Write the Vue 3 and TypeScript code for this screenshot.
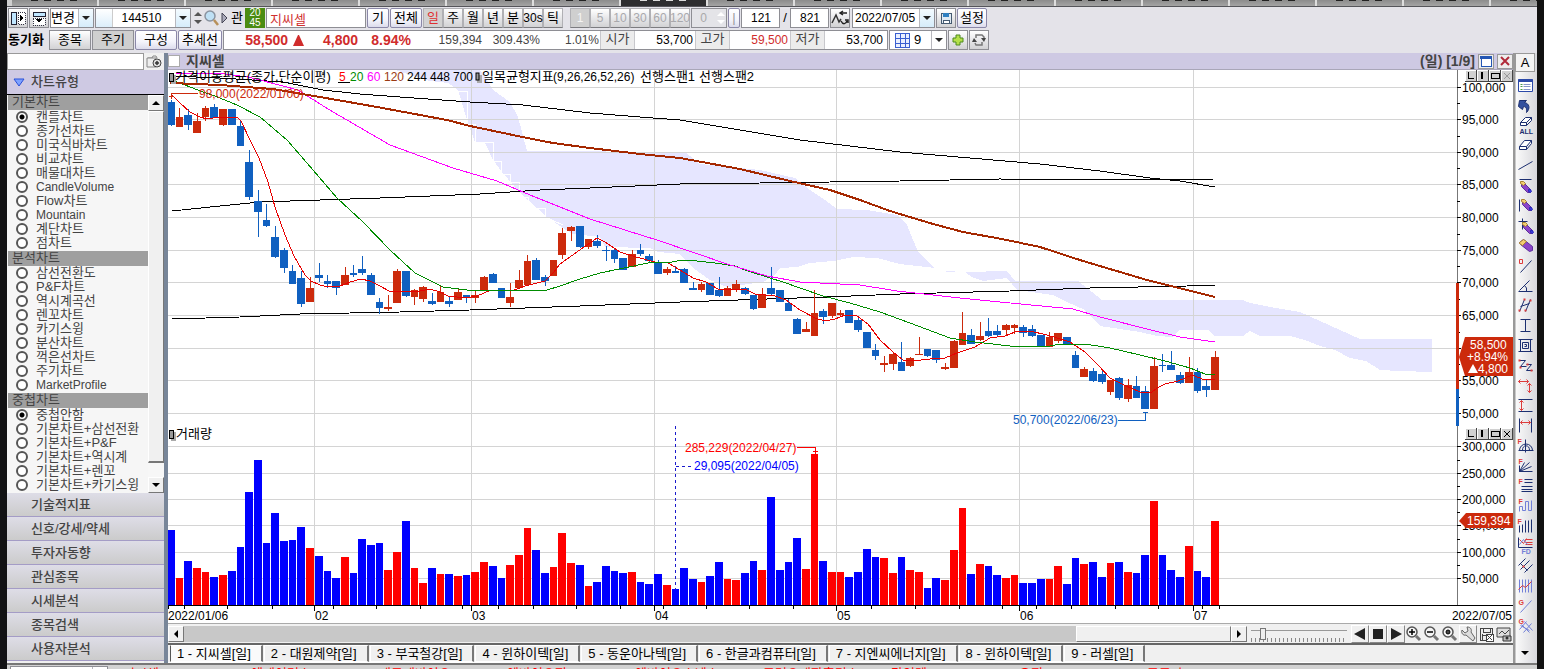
<script setup lang="ts">
interface Shape {
  d?: string
  c?: string
  f?: string
  w?: number
  t?: string
  x?: number
  y?: number
  s?: number
}

const navy = '#1c2f70'
const red = '#dd3c3c'
const peri = '#7280d8'

const stripTabs = Array.from({ length: 18 }, (_, i) => i)

const periods = ['일', '주', '월', '년', '분', '30s', '틱']
const minutes = ['1', '5', '10', '30', '60', '120']

const groups = [
  {
    name: '기본차트',
    items: ['캔들차트', '종가선차트', '미국식바차트', '비교차트', '매물대차트', 'CandleVolume', 'Flow차트', 'Mountain', '계단차트', '점차트'],
  },
  {
    name: '분석차트',
    items: ['삼선전환도', 'P&F차트', '역시계곡선', '렌꼬차트', '카기스윙', '분산차트', '꺽은선차트', '주기차트', 'MarketProfile'],
  },
  {
    name: '중첩차트',
    items: ['중첩안함', '기본차트+삼선전환', '기본차트+P&F', '기본차트+역시계', '기본차트+렌꼬', '기본차트+카기스윙'],
  },
]
const isLatin = (s: string) => /^[A-Za-z]+$/.test(s)
const sections = ['기술적지표', '신호/강세/약세', '투자자동향', '관심종목', '시세분석', '종목검색', '사용자분석']
const chartTabs = ['지씨셀', '대원제약', '부국철강', '윈하이텍', '동운아나텍', '한글과컴퓨터', '지엔씨에너지', '윈하이텍', '러셀']
const tickers = ['지씨셀', '에케이머스', '케코케바이오', '엔바이오진', '엔바이오스넥스', '고려오케팜홀딩스', '타임텍', '유진', '고고가', 'TPS']

// high, body top, body bottom, low
const raw =
  'b100,102,125,126 r108,117,127,127 b109,115,125,130 r113,121,133,133 r106,108,117,121 b104,107,118,118 r109,109,125,126 b109,109,125,125 b120,126,146,146 b150,162,197,200 ' +
  'b190,201,212,237 b204,220,226,227 b226,237,257,258 b248,250,268,273 b265,271,284,284 b271,278,304,307 r277,288,302,302 b263,275,278,282 b275,281,284,288 b281,281,288,295 ' +
  'r267,275,285,285 b265,273,275,277 b256,269,273,275 b273,275,295,295 b298,302,308,314 r295,307,309,311 r269,271,303,303 b271,271,296,297 r289,290,297,305 r286,287,299,302 ' +
  'b293,301,304,305 r286,292,302,302 b296,301,304,307 r288,292,300,300 b295,295,298,303 r290,295,298,303 r276,277,291,291 b273,274,283,283 b288,288,298,298 r283,297,303,307 ' +
  'r270,280,288,288 r255,261,285,285 b258,260,280,280 b275,277,281,286 r260,260,276,276 r228,233,255,259 r226,227,231,241 b226,226,247,248 r239,239,247,249 b235,241,246,248 ' +
  'b246,250,251,261 b248,250,259,263 b258,258,270,270 r250,254,267,267 b244,250,254,256 b254,256,261,263 b260,263,274,274 r267,269,273,275 b266,271,273,273 b268,269,283,283 ' +
  'b282,288,290,290 r282,284,290,292 b283,283,295,295 b277,290,296,297 r286,288,296,296 r280,284,290,292 b287,288,294,295 b295,295,309,310 r288,294,308,308 b267,288,294,295 ' +
  'b290,290,302,302 b299,303,311,311 b318,319,334,334 r322,329,332,332 r290,313,336,336 b309,311,317,324 r303,303,316,318 r310,313,315,317 b310,310,323,323 b316,320,330,332 ' +
  'b332,332,348,348 b344,350,356,360 r356,363,365,372 r352,354,364,370 b342,362,371,371 r357,358,366,367 r337,354,355,355 b349,349,356,357 b350,350,360,363 r363,367,369,370 ' +
  'r340,341,368,368 r312,333,345,345 b329,335,344,344 r322,336,340,341 b318,331,336,337 b325,331,335,337 r324,325,330,336 r324,325,328,334 b325,327,333,337 b325,329,336,337 ' +
  'b335,335,347,347 r332,337,347,347 r333,333,341,343 b337,337,345,345 b351,355,368,368 r367,369,377,377 b368,371,381,382 b369,374,382,384 r380,380,392,395 b377,378,398,400 ' +
  'r379,385,399,402 b376,386,398,398 b386,391,409,409 r357,366,409,409 b354,365,366,372 b351,365,370,370 b372,375,383,384 r357,372,383,383 b368,372,391,393 b380,386,390,397 r351,357,390,390'

const volumes = [
  75, 27, 44, 37, 33, 28, 30, 34, 58, 113, 145, 62, 92, 64, 65, 78, 57, 49, 34, 27, 48, 32, 66, 60, 62, 35, 53, 84, 37, 22, 37, 31, 31, 29, 30, 33, 43, 39, 27, 40,
  50, 77, 55, 32, 38, 72, 42, 40, 19, 23, 39, 34, 32, 33, 23, 21, 31, 20, 16, 37, 26, 23, 29, 43, 26, 25, 32, 44, 35, 108, 35, 43, 67, 36, 151, 44, 33, 33, 28, 33,
  56, 48, 47, 32, 48, 35, 33, 17, 27, 25, 55, 97, 31, 41, 39, 30, 27, 30, 22, 22, 26, 26, 39, 21, 47, 41, 43, 28, 42, 43, 33, 32, 50, 104, 50, 35, 28, 59, 34, 28, 84,
]

const left = (i: number) => Math.floor(167.4 + i * 8.7)
const candles = raw.split(' ').map((s, i) => {
  const [h, t, b, l] = s.slice(1).split(',').map(Number)
  const x = left(i)
  const w = left(i + 1) - x - 1
  return { up: s[0] === 'r', h, t, b, l, x, w, mid: x + Math.floor(w / 2), v: volumes[i] }
})

const priceTicks = [87, 119, 152, 184, 217, 250, 282, 315, 348, 380, 413].map((y, i) => ({ y, label: (100000 - i * 5000).toLocaleString('en-US') }))
const shownPrices = priceTicks.filter((t) => t.y !== 348)
const volTicks = [446, 473, 499, 525, 552, 578].map((y, i) => ({ y, label: (300000 - i * 50000).toLocaleString('en-US') }))
const minorTicks = [103, 136, 168, 201, 234, 266, 299, 332, 364, 397, 460, 486, 512, 539, 565]
const months = [
  { x: 314, label: '02' },
  { x: 471, label: '03' },
  { x: 654, label: '04' },
  { x: 836, label: '05' },
  { x: 1019, label: '06' },
  { x: 1193, label: '07' },
]
const weekTicks = [168, 184, 227, 272, 333, 376, 420, 462, 498, 533, 576, 620, 663, 706, 749, 793, 871, 915, 959, 1002, 1036, 1071, 1115, 1158, 1202, 1219]

const lines = [
  { c: '#000', w: 1, p: '172,76 220,78 283,82 323,90 360,94 400,97 470,102 523,105 590,113 640,117 680,120 740,130 800,140 850,146 900,152 970,158 1040,164 1100,171 1150,178 1180,181 1215,187' },
  { c: '#000', w: 1, p: '172,211 220,206 260,202 320,200 380,198 480,194 540,190 590,188 680,184 760,183 830,182 900,181 1000,179 1100,180 1215,179' },
  { c: '#000', w: 1, p: '172,319 240,317 300,314 400,312 470,310 580,306 680,302 767,299 827,297 900,294 1010,291 1090,288 1187,286 1215,285' },
  { c: '#e80000', w: 1, p: '172,95 180,103 190,112 200,117 207,119 220,117 238,118 241,121 250,140 259,158 268,182 275,207 285,235 294,256 305,275 311,281 320,285 328,287 340,286 350,282 361,279 370,281 380,286 389,291 400,291 410,292 420,291 430,289 440,292 448,296 466,298 477,296 491,290 512,291 525,286 545,281 553,273 560,264 584,247 590,243 597,238 605,242 620,252 636,257 655,262 668,263 680,270 693,278 706,282 718,289 735,289 745,289 755,294 775,296 786,300 800,310 815,318 825,321 835,319 845,315 857,316 868,324 880,340 893,352 903,360 913,361 930,359 945,358 957,353 975,347 990,338 1005,336 1015,332 1030,331 1047,335 1070,342 1085,352 1098,365 1110,378 1124,385 1140,392 1152,392 1157,388 1165,384 1178,381 1192,375 1205,380 1215,379' },
  { c: '#008c00', w: 1, p: '172,80 190,87 203,92 215,96 237,105 260,117 287,140 307,163 337,198 363,222 390,250 415,273 443,287 467,290 513,290 520,291 547,290 560,286 580,279 600,273 648,263 672,262 683,260 697,261 715,263 735,266 745,270 770,278 783,282 800,288 823,296 850,303 880,312 910,323 950,338 975,342 1010,346 1045,347 1060,344 1085,344 1110,348 1140,355 1165,361 1190,368 1205,374 1215,374' },
  { c: '#f0f', w: 1, p: '176,73 217,73 248,77 283,86 298,90 328,109 390,145 453,168 497,181 530,195 590,219 660,241 727,264 767,276 800,282 860,285 897,291 933,295 960,298 1000,302 1073,309 1100,317 1147,329 1180,337 1215,342' },
  { c: '#a52800', w: 2, p: '170,83 220,85 273,89 320,97 377,107 447,120 470,126 527,138 553,143 590,148 640,154 680,158 740,169 790,181 830,190 860,200 890,211 933,224 963,232 1002,239 1040,247 1083,261 1147,280 1183,289 1215,297' },
]

const legend = [
  { x: 339, t: '5', c: '#f00' },
  { x: 350, t: '20', c: '#008c00' },
  { x: 367, t: '60', c: '#f0f' },
  { x: 384, t: '120', c: '#9a3a12' },
  { x: 407, t: '244', c: '#000' },
  { x: 430, t: '448', c: '#000' },
  { x: 453, t: '700', c: '#000' },
]

const pencil = (dx: number, dy: number): Shape[] => [
  { d: `M${dx + 1} ${dy + 1}l2 0 7 7 0 3 -3 0 -6 -6z`, c: '#5b2f9c', f: '#8c45c8', w: 1 },
  { d: `M${dx} ${dy}l3 0 2 2 -2 2 -3 -2z`, c: '#a98432', f: '#f2cf72', w: 1 },
  { d: `M${dx + 8} ${dy + 8}l2 0 1 2 -1 1 -2 -1z`, c: '#2a2ab8', f: '#3d3de0', w: 1 },
]

const tools: { name: string; shapes: Shape[] }[] = [
  { name: '목록', shapes: [{ d: 'M2 3h14v12h-14z', c: '#2b49a8', f: '#fff', w: 1 }, { d: 'M2 4h14', c: '#2b49a8', w: 3 }, { d: 'M4 8h2M4 10h2M4 13h2', c: '#4a9a4a', w: 1 }, { d: 'M7 8h7M7 10h7M7 13h7', c: '#8795c8', w: 1 }] },
  { name: '되돌리기', shapes: [{ d: 'M3 4h7l-2 2c5 1 6 6 2 10 1 -4 -1 -6 -3 -6l-1 3 -4 -3z', c: navy, f: '#33509e', w: 1 }] },
  { name: '전체삭제', shapes: [{ d: 'M4 6l5 -5h6l-5 5zM4 6v3h6v-3M10 9l5 -5v-3', c: navy, f: '#fff', w: 1 }, { t: 'ALL', x: 3, y: 17, s: 7, c: navy }] },
  { name: '삭제', shapes: [{ d: 'M3 10l5 -6h7l-5 6zM3 10v3h7v-3M10 13l5 -6v-3', c: navy, f: '#fff', w: 1 }] },
  { name: '추세선', shapes: [{ d: 'M2 13L16 5', c: navy, w: 1 }] },
  { name: '수평선', shapes: [{ d: 'M3 3h12', c: navy, w: 1 }, ...pencil(4, 5)] },
  { name: '수직선', shapes: [{ d: 'M3 3v12', c: navy, w: 1 }, ...pencil(5, 3)] },
  { name: '십자선', shapes: [{ d: 'M2 5h9M6 2v11', c: navy, w: 1 }, ...pencil(6, 6)] },
  { name: '지우개', shapes: [{ d: 'M3 6l4 -3 9 7 0 4 -3 1 -9 -7z', c: '#5b2f9c', f: '#8c45c8', w: 1 }, { d: 'M3 6l4 -3 3 2 -4 4 -3 -2z', c: '#a98432', f: '#f2cf72', w: 1 }] },
  { name: '대각선', shapes: [{ d: 'M3 3h3v4h-3z', c: red, w: 1 }, { d: 'M4 16L15 4', c: navy, w: 1 }] },
  { name: '각도', shapes: [{ d: 'M2 15h14M3 14L13 4M8 9q3 2 2 6', c: navy, w: 1 }] },
  { name: '평행선', shapes: [{ d: 'M3 15L8 3M9 15L14 3M4 10l9 -3', c: navy, w: 1 }, { d: 'M2 14h2M7 3h2M8 14h2M13 4h2', c: red, w: 2 }] },
  { name: '기둥', shapes: [{ d: 'M4 3h10M4 15h10M9 3v12', c: navy, w: 1 }] },
  { name: '사각', shapes: [{ d: 'M2 3h14M2 15h14M4 3v12M14 3v12M6 6h6v6h-6zM8 8h2v2h-2', c: navy, w: 1 }] },
  { name: '파동', shapes: [{ d: 'M3 4h6L4 10h6M10 8h5l-5 6h6', c: navy, w: 1 }, { d: 'M2 4h2M3 11h2M10 8h2M14 14h2', c: red, w: 2 }] },
  { name: '가로세로', shapes: [{ d: 'M2 5h10M4 3L2 5l2 2M10 3l2 2 -2 2M13 7v9M11 9l2 -2 2 2M11 14l2 2 2 -2', c: red, w: 1 }] },
  { name: '높이', shapes: [{ d: 'M2 3h14M2 15h14', c: navy, w: 1 }, { d: 'M5 4v10M3 6l2 -2 2 2M3 12l2 2 2 -2', c: red, w: 1 }] },
  { name: '너비', shapes: [{ d: 'M3 2v14M15 2v14', c: navy, w: 1 }, { d: 'M4 6h10M6 4L4 6l2 2M12 4l2 2 -2 2', c: red, w: 1 }] },
  { name: '피보나치 원호', shapes: [{ t: 'F', x: 1, y: 7, s: 7, c: red }, { d: 'M3 14a6 6 0 0 1 13 0M6 14a3 4 0 0 1 7 0M9 3v13M2 14h15', c: navy, w: 1 }] },
  { name: '피보나치 팬', shapes: [{ t: 'F', x: 2, y: 7, s: 7, c: red }, { d: 'M3 9v6h13M3 15L8 6M3 15l10 -9M3 15l12 -5', c: navy, w: 1 }] },
  { name: '피보나치 되돌림', shapes: [{ t: 'F', x: 2, y: 7, s: 7, c: red }, { d: 'M8 3h8M8 6h8M5 10h11M5 13h11M5 15h11', c: navy, w: 1 }] },
  { name: '피보나치 확장', shapes: [{ t: 'F', x: 2, y: 7, s: 7, c: red }, { d: 'M3 15v-5h3v4h3v-9h3v9h3v-10', c: peri, w: 1 }] },
  { name: '피보나치 시간', shapes: [{ t: 'F', x: 1, y: 7, s: 7, c: red }, { d: 'M3 9v7M6 8v8M9 4v12M12 4v12M15 3v13', c: navy, w: 1 }] },
  { name: 'FD', shapes: [{ d: 'M2 1v10h14', c: navy, w: 1 }, { d: 'M3 3l4 4 3 -5M9 3h7M9 6h7M9 8h7', c: red, w: 1 }, { d: 'M3 8l4 -5 4 5', c: peri, w: 1 }, { t: 'FD', x: 5, y: 17, s: 7, c: peri }] },
  { name: '포크', shapes: [{ d: 'M2 9L9 2M4 13L13 4M8 16l8 -8M4 7l7 7', c: navy, w: 1 }, { d: 'M6 10h2', c: red, w: 2 }] },
  { name: '회귀', shapes: [{ d: 'M3 3v13M6 3v13M9 3v13M12 3v13M15 3v13', c: peri, w: 1 }, { d: 'M2 13l4 -4 3 2 6 -6', c: red, w: 1 }] },
  { name: '갠선', shapes: [{ t: 'G', x: 2, y: 8, s: 7, c: red }, { d: 'M4 16L15 4', c: peri, w: 1 }] },
  { name: '갠격자', shapes: [{ t: 'G', x: 2, y: 7, s: 7, c: red }, { d: 'M5 8l8 8M8 5l8 9M3 13l7 -8M7 16l8 -9M4 9l9 5', c: peri, w: 1 }] },
]
</script>

<template>
  <div class="app">
    <div class="strip">
      <span v-for="i in stripTabs" :key="i" class="strip-tab" :class="{ on: i === 7 }"><i></i></span>
    </div>

    <div class="bars">
      <div class="bar">
        <button class="b20" aria-label="왼쪽 패널">
          <svg width="16" height="16" shape-rendering="crispEdges"><path d="M1 2h5v12h-5z" fill="#bfe6ff" stroke="#223" /><path d="M8 2h7v12h-7z" fill="#fff" stroke="#334" stroke-dasharray="1 1" /><path d="M10 5v6l4-3z" fill="#000" /></svg>
        </button>
        <button class="b20" aria-label="위쪽 패널">
          <svg width="16" height="16" shape-rendering="crispEdges"><path d="M2 2h12v4h-12z" fill="#bfe6ff" stroke="#223" /><path d="M2 8h12v7h-12z" fill="#fff" stroke="#334" stroke-dasharray="1 1" /><path d="M5 9h6l-3 4z" fill="#000" /></svg>
        </button>
        <div class="combo w44"><select aria-label="종목 변경"><option>변경</option></select><span class="dd blue"></span></div>
        <div class="combo code"><span class="slot"></span><input aria-label="종목코드" value="144510"><span class="dd blue"></span></div>
        <div class="spin"><span class="up"></span><span class="down"></span></div>
        <button class="mini" aria-label="종목 찾기">
          <svg width="15" height="16"><circle cx="6" cy="6" r="5" fill="#bfe0f5" stroke="#8b93a0" stroke-width="1.5" /><path d="M10 10l4 5" stroke="#b8905a" stroke-width="2.5" /></svg>
        </button>
        <button class="mini w10" aria-label="다음"><svg width="7" height="10"><path d="M1 0v10l5-5z" fill="#aab" stroke="#445" /></svg></button>
        <button class="mini w14">관</button>
        <span class="rate"><span>20</span><span>45</span></span>
        <input class="field name" aria-label="종목명" value="지씨셀">
        <button class="lav w22">기</button>
        <button class="lav w32">전체</button>
        <div class="seg"><button v-for="(p, i) in periods" :key="p" :class="{ on: i === 0, sm: p === '30s' }">{{ p }}</button></div>
        <div class="seg off"><button v-for="(p, i) in minutes" :key="p" class="sm" :class="{ on: i === 0 }" disabled>{{ p }}</button></div>
        <div class="combo zero"><input aria-label="사용자 주기" value="0" disabled><span class="spin"><span class="up"></span><span class="down"></span></span></div>
        <button class="lav w12">|</button>
        <input class="field num" aria-label="표시 개수" value="121">
        <span class="slash">/</span>
        <input class="field num" aria-label="전체 개수" value="821">
        <button class="b20" aria-label="차트 되돌리기">
          <svg width="18" height="16"><path d="M1 13l4-8 3 7 2-3" fill="none" stroke="#333" stroke-width="1.5" /><path d="M16 3h-6M12 1l-3 2 3 2M10 11c2 4 5 3 6 0M14 10h3v3" fill="none" stroke="#222" stroke-width="1.5" /></svg>
        </button>
        <div class="combo date"><input aria-label="기준일" value="2022/07/05"><span class="dd blue"></span></div>
        <button class="b20" aria-label="저장">
          <svg width="14" height="14" shape-rendering="crispEdges"><path d="M2 2h10v10h-10z" fill="#dfe9f2" stroke="#455a70" /><path d="M4 2h6v4h-6z" fill="#2f7fc0" /><path d="M4 9h6v3h-6z" fill="#fff" stroke="#455a70" /></svg>
        </button>
        <button class="lav w30">설정</button>
      </div>

      <div class="bar">
        <b class="sync">동기화</b>
        <button class="gry w42">종목</button>
        <button class="gry w42 on">주기</button>
        <button class="lav w42">구성</button>
        <button class="lav w44">추세선</button>
        <div class="quote">
          <b class="q price">58,500</b>
          <svg class="tri" width="11" height="11"><path d="M5 0h1l5 11h-11z" fill="#d02c2c" /></svg>
          <b class="q diff">4,800</b>
          <b class="q pct">8.94%</b>
          <span class="q vol">159,394</span>
          <span class="q rat">309.43%</span>
          <span class="q turn">1.01%</span>
          <span class="lab">시가</span><span class="q val">53,700</span>
          <span class="lab">고가</span><span class="q val hi">59,500</span>
          <span class="lab">저가</span><span class="q val">53,700</span>
        </div>
        <div class="combo nine">
          <svg width="16" height="16" shape-rendering="crispEdges"><path d="M1 1h14v14h-14zM6 1v14M11 1v14M1 6h14M1 11h14" fill="#eaf0ff" stroke="#3a5fd0" /></svg>
          <select aria-label="화면 분할"><option>9</option></select><span class="dd"></span>
        </div>
        <button class="b20" aria-label="추가"><svg width="12" height="12"><path d="M4 1h4v3h3v4h-3v3h-4v-3h-3v-4h3z" fill="#b4e04a" stroke="#4c8a1c" /></svg></button>
        <button class="b20" aria-label="새로고침"><svg width="14" height="14"><path d="M4 5V2h6l2 2v2M10 9v3H4l-1-2" fill="none" stroke="#777" stroke-width="1.5" /><path d="M9 5h5l-2 4zM0 9l2-4 3 4z" fill="#444" /></svg></button>
      </div>
    </div>

    <div class="main">
      <aside class="side">
        <div class="find">
          <input aria-label="차트 검색">
          <button aria-label="검색 설정"><svg width="16" height="14"><path d="M2 3h4l1-2h3l1 2" fill="none" stroke="#888" /><path d="M1 3h9v9h-9z" fill="#eee" stroke="#888" /><circle cx="11" cy="8" r="4" fill="#ddd" stroke="#444" /><path d="M9 8h4M11 6v4" stroke="#333" stroke-width="1.5" /></svg></button>
        </div>
        <h2 class="head"><svg width="12" height="9"><path d="M1 1h10l-5 7z" fill="#7ea2ff" stroke="#2a50d8" /></svg>차트유형</h2>
        <div class="listbox">
          <div class="list">
            <fieldset v-for="(g, gi) in groups" :key="g.name">
              <legend>{{ g.name }}</legend>
              <label v-for="(n, i) in g.items" :key="n" :class="{ sm: isLatin(n) }"><input type="radio" :name="gi === 2 ? 'overlay' : 'kind'" :checked="i === 0 && gi !== 1">{{ n }}</label>
            </fieldset>
          </div>
          <div class="vbar"><button class="sb" aria-label="위로"><i class="a-up"></i></button><div class="vthumb"></div><div class="vtrack"></div><button class="sb" aria-label="아래로"><i class="a-down"></i></button></div>
        </div>
        <button v-for="s in sections" :key="s" class="section">{{ s }}</button>
      </aside>

      <section class="center">
        <header class="title">
          <input type="checkbox" aria-label="차트 선택">
          <b>지씨셀</b>
          <span class="sp"></span>
          <b>(일) [1/9]</b>
          <button class="wb" aria-label="최대화"><svg width="12" height="12" shape-rendering="crispEdges"><path d="M1 2h10v9h-10z" fill="#fff" stroke="#2456b4" /><path d="M0 2h12" stroke="#2456b4" stroke-width="3" /></svg></button>
          <button class="wb" aria-label="닫기"><svg width="10" height="10"><path d="M1 1l8 8M9 1l-8 8" stroke="#b02a3a" stroke-width="2" /></svg></button>
        </header>

        <svg class="chart" viewBox="168 70 1345 553" role="img" aria-label="지씨셀 일봉 차트">
          <g shape-rendering="crispEdges">
            <g fill="#e6e6ff">
              <polygon points="395,70 480,70 487,80 493,90 510,102 518,117 527,151 685,152 700,164 760,170 795,178 810,190 825,200 837,209 867,210 897,215 907,225 918,252 935,268 900,264 877,258 853,257 833,261 810,263 797,267 780,268 775,275 763,282 727,287 710,280 693,268 680,254 658,252 650,248 605,247 600,237 573,234 563,228 547,217 520,193 502,172 493,160 485,143 475,142 467,120 458,90 448,83 430,81" />
              <polygon points="965,272 1007,271 1015,281 1078,281 1102,300 1243,300 1250,303 1270,307 1300,312 1340,330 1360,339 1432,339 1432,372 1400,371 1380,370 1366,361 1350,358 1335,350 1320,346 1305,340 1290,336 1260,336 1250,331 1243,336 1215,336 1208,330 1180,330 1172,337 1157,336 1140,332 1100,326 1085,310 1067,302 1053,295 1017,290 1007,278 983,281 972,277" />
              <rect x="946" y="271" width="9" height="1" />
            </g>
            <polyline points="455,91 467,91 467,124 475,124 475,142 493,142 493,161 501,161 501,174 510,174 510,182 519,182 519,197 528,197 528,208 545,208 545,217 563,225" fill="none" stroke="#fff" />
            <g fill="#d4d4d4">
              <rect v-for="t in priceTicks" :key="t.y" x="168" :y="t.y" width="1289" height="1" />
              <rect v-for="t in volTicks" :key="t.y" x="168" :y="t.y" width="1289" height="1" />
              <rect v-for="m in months" :key="m.x" :x="m.x" y="70" width="1" height="535" />
            </g>
            <polyline v-for="l in lines.slice(0, 3)" :key="l.p" :points="l.p" fill="none" :stroke="l.c" :stroke-width="l.w" />
            <g v-for="k in candles" :key="k.x">
              <rect :x="k.mid" :y="k.h" width="1" :height="k.l - k.h" :fill="k.up ? '#cc2a0c' : '#1060c0'" />
              <rect :x="k.x" :y="k.t" :width="k.w" :height="k.b - k.t" :fill="k.up ? '#cc2a0c' : '#1060c0'" />
              <rect :x="k.x" :y="605 - k.v" :width="k.w" :height="k.v" :fill="k.up ? '#f00' : '#00f'" />
            </g>
            <polyline v-for="l in lines.slice(3)" :key="l.p" :points="l.p" fill="none" :stroke="l.c" :stroke-width="l.w" />

            <rect x="1457" y="70" width="1" height="535" fill="#777" />
            <rect x="168" y="605" width="1345" height="1" fill="#000" />
            <rect v-for="t in priceTicks" :key="'p' + t.y" x="1457" :y="t.y" width="4" height="1" />
            <rect v-for="t in volTicks" :key="'v' + t.y" x="1457" :y="t.y" width="4" height="1" />
            <rect v-for="t in minorTicks" :key="t" x="1457" :y="t" width="3" height="1" />
            <rect v-for="x in weekTicks" :key="x" :x="x" y="605" width="1" height="4" />
            <rect v-for="m in months" :key="'m' + m.x" :x="m.x" y="605" width="1" height="6" />
            <rect x="1456" y="283" width="3" height="106" fill="#cc2a0c" />
            <rect x="1456" y="389" width="3" height="37" fill="#1060c0" />

            <path d="M198 93.500h-27v5M169 96.500h5" fill="none" stroke="#cc2a0c" />
            <path d="M1118 420.500h27.500v-9M1143 412.500h5" fill="none" stroke="#1060c0" />
            <path d="M797 447.500h18.500v6M813 451.500h5" fill="none" stroke="#f00" />
            <path d="M675.500 426v164M676 466.500h18" fill="none" stroke="#1a1acc" stroke-dasharray="3 3" />
            <path d="M338 82.500h12" stroke="#000" />
          </g>

          <g class="num-text">
            <text v-for="t in shownPrices" :key="t.y" x="1462" :y="t.y + 5">{{ t.label }}</text>
            <text v-for="t in volTicks" :key="t.y" x="1462" :y="t.y + 5">{{ t.label }}</text>
            <text v-for="m in months" :key="m.x" :x="m.x + 1" y="620">{{ m.label }}</text>
            <text x="168" y="620">2022/01/06</text>
            <text x="1512" y="620" text-anchor="end">2022/07/05</text>
            <text x="199" y="98" fill="#cc2a0c">98,000(2022/01/06)</text>
            <text x="1013" y="424" fill="#1060c0">50,700(2022/06/23)</text>
            <text x="685" y="452" fill="#f00">285,229(2022/04/27)</text>
            <text x="694" y="470" fill="#00f">29,095(2022/04/05)</text>
            <text v-for="l in legend" :key="l.t" :x="l.x" y="81" :fill="l.c">{{ l.t }}</text>
            <text x="553" y="81">(9,26,26,52,26)</text>
          </g>

          <g v-for="y in [73, 430]" :key="y" shape-rendering="crispEdges">
            <rect x="171" :y="y + 2" width="5" height="9" fill="#aaa" />
            <rect x="169" :y="y" width="4" height="8" fill="#999" stroke="#000" />
          </g>
          <rect x="477" y="75" width="5" height="8" fill="#aaa" />
          <rect x="476" y="73" width="3" height="7" fill="#999" stroke="#000" />
          <g class="ko-text">
            <text x="175" y="81">가격이동평균(종가,단순이평)</text>
            <text x="482" y="81">일목균형지표</text>
            <text x="640" y="81">선행스팬1</text>
            <text x="699" y="81">선행스팬2</text>
            <text x="176" y="438">거래량</text>
          </g>

          <polygon points="1465,337 1514,337 1514,376 1465,376 1459,357" fill="#cc2a0c" />
          <polygon points="1459,521 1466,513 1514,513 1514,528 1466,528" fill="#cc2a0c" />
          <g class="num-text" fill="#fff">
            <text x="1470" y="349">58,500</text>
            <text x="1467" y="361">+8.94%</text>
            <text x="1478" y="373">4,800</text>
            <path d="M1473 364l5 9h-10z" />
            <text x="1467" y="525">159,394</text>
          </g>

          <g v-for="y in [70, 428]" :key="'w' + y" shape-rendering="crispEdges">
            <g v-for="n in 4" :key="n">
              <rect :x="1453 + n * 12" :y="y" width="12" height="12" fill="#444" />
              <rect :x="1453 + n * 12" :y="y" width="11" height="11" fill="#fff" />
              <rect :x="1454 + n * 12" :y="y + 1" width="10" height="10" fill="#d0d0d0" />
            </g>
            <path :d="`M1468.500 ${y + 2}v6.500h5`" fill="none" stroke="#000" />
            <path :d="`M1482 ${y + 2}v7`" stroke="#000" stroke-width="2" />
            <path :d="`M1491 ${y + 3.5}h8v5h-8zM1491 ${y + 3}h8`" fill="none" stroke="#000" />
            <path :d="`M1504 ${y + 3}l6 6M1510 ${y + 3}l-6 6`" :stroke="y === 70 ? '#999' : '#000'" />
          </g>
        </svg>

        <div class="hbar">
          <button class="sb" aria-label="왼쪽으로"><i class="a-left"></i></button>
          <div class="htrack"></div>
          <div class="hthumb"></div>
          <button class="sb" aria-label="오른쪽으로"><i class="a-right"></i></button>
          <input class="zoom" type="range" aria-label="재생 속도" min="0" max="20" value="2">
          <button class="ctl" aria-label="이전"><svg width="14" height="14"><path d="M12 1v12l-11-6z" fill="#222" /></svg></button>
          <button class="ctl" aria-label="정지"><svg width="14" height="14"><path d="M2 2h10v10h-10z" fill="#222" /></svg></button>
          <button class="ctl" aria-label="다음"><svg width="14" height="14"><path d="M2 1v12l11-6z" fill="#222" /></svg></button>
          <button v-for="z in ['+', '-', 'a']" :key="z" class="ctl flat" :aria-label="'확대 ' + z">
            <svg width="16" height="16"><circle cx="6" cy="6" r="5" fill="#f4f4f4" stroke="#555" stroke-width="1.500" /><path d="M10 10l4 4" stroke="#777" stroke-width="3" /><path v-if="z === '+'" d="M3 6h6M6 3v6" stroke="#000" stroke-width="1.500" /><path v-else-if="z === '-'" d="M3 6h6" stroke="#000" stroke-width="1.500" /><circle v-else cx="6" cy="6" r="2" fill="#444" stroke="#000" /></svg>
          </button>
          <button class="ctl" aria-label="도구"><svg width="16" height="16"><path d="M2 4l3 3 3-2-1-4c4 0 5 3 4 5l4 6-2 3-7-6c-3 1-5-2-4-5z" fill="#ddd" stroke="#666" /></svg></button>
          <button class="ctl flat" aria-label="저장"><svg width="16" height="16" shape-rendering="crispEdges"><path d="M2 2h12v12h-12zM5 2v4h7v-4M5 9h4M4 8v6" fill="#eee" stroke="#444" /><path d="M8 8h7v7h-7z" fill="#fff" stroke="#444" /><path d="M9 9l5 5M14 9l-5 5" stroke="#444" /></svg></button>
          <button class="ctl flat" aria-label="화면 캡처"><svg width="16" height="16"><path d="M1 2h13v9h-13z" fill="#ddd" stroke="#444" /><path d="M3 8l3-3 3 3 4-4" fill="none" stroke="#444" /><path d="M7 10h8v5h-8z" fill="#bbb" stroke="#333" /><circle cx="11" cy="12" r="1.500" fill="#333" /></svg></button>
        </div>

        <nav class="tabs">
          <button v-for="(t, i) in chartTabs" :key="i" :class="{ on: i === 0 }">{{ i + 1 }} - {{ t }}[일]</button>
        </nav>
      </section>

      <aside class="tools">
        <button class="ta">A</button>
        <div class="tlist">
          <button v-for="t in tools" :key="t.name" :aria-label="t.name">
            <svg width="18" height="18" viewBox="-0.5 -0.5 18 18">
              <template v-for="(s, i) in t.shapes" :key="i">
                <text v-if="s.t" :x="s.x" :y="s.y" :font-size="s.s" :fill="s.c">{{ s.t }}</text>
                <path v-else :d="s.d" :stroke="s.c" :fill="s.f || 'none'" :stroke-width="s.w" />
              </template>
            </svg>
          </button>
        </div>
        <button class="tdown" aria-label="더 보기"><i class="a-down"></i></button>
      </aside>
    </div>

    <footer class="foot">
      <div class="combo pick"><select aria-label="관심그룹"><option>인공포트</option></select><span class="dd"></span></div>
      <span v-for="t in tickers" :key="t" class="tick">{{ t }}</span>
    </footer>
  </div>
</template>

<style>
html,
body {
  margin: 0;
  background: #000;
}
</style>

<style scoped>
* {
  box-sizing: border-box;
}
.app {
  height: 100vh;
  display: flex;
  flex-direction: column;
  overflow: hidden;
  background: #e4e3e9;
  border-left: 7px solid #121214;
  border-right: 7px solid #111;
  font-family: 'Liberation Sans', 'Noto Sans CJK KR', sans-serif;
  font-size: 13px;
  line-height: 16px;
  color: #000;
}
button,
input,
select {
  font: inherit;
  color: inherit;
  margin: 0;
  padding: 0;
  border: 0;
  border-radius: 0;
  background: none;
  outline: 0;
  min-width: 0;
}
button {
  display: flex;
  align-items: center;
  justify-content: center;
  flex: none;
  white-space: nowrap;
}
select {
  appearance: none;
}
svg {
  display: block;
  flex: none;
}

.strip {
  display: flex;
  height: 7px;
  flex: none;
  padding-left: 5px;
  background: #cfcfcf;
  border-bottom: 1px solid #55555a;
  overflow: hidden;
}
.strip-tab {
  width: 87px;
  flex: none;
  background: linear-gradient(#8c8c8c, #a4a4a4);
  border-right: 2px solid #dedede;
}
.strip-tab i {
  display: block;
  width: 48px;
  height: 1px;
  margin: 0 auto;
  background: repeating-linear-gradient(90deg, #222 0 7px, transparent 7px 13px);
}
.strip-tab.on {
  background: #2e2e30;
}
.strip-tab.on i {
  background: repeating-linear-gradient(90deg, #ddd 0 7px, transparent 7px 13px);
}

.bars {
  flex: none;
  padding: 1px 0 3px 1px;
  display: flex;
  flex-direction: column;
  gap: 2px;
}
.bar {
  display: flex;
  align-items: center;
  gap: 1px;
  height: 20px;
}
.bar button {
  height: 20px;
  border: 1px solid #8e8e94;
  background: linear-gradient(#fff, #e8e8ea 50%, #d2d2d4);
}
.bar button.b20 {
  width: 20px;
}
.bar button.mini {
  width: 15px;
  border: 0;
  background: none;
}
.bar button.w10 {
  width: 9px;
}
.bar button.w14 {
  width: 14px;
}
.bar button.lav {
  border-color: #8b88a8;
  border-radius: 2px;
  background: linear-gradient(#fff, #f4f4fb 60%, #dcdcec);
}
.bar button.gry.on {
  background: #cfcfcf;
}
.bar button.w12 {
  width: 12px;
  color: #999;
}
.w22 {
  width: 22px;
}
.w30 {
  width: 30px;
}
.w32 {
  width: 32px;
}
.w42 {
  width: 42px;
}
.w44 {
  width: 44px;
}
.combo {
  display: flex;
  align-items: center;
  height: 20px;
  flex: none;
  border: 1px solid #8e8e94;
  background: #fff;
}
.combo input,
.combo select {
  flex: 1;
  height: 100%;
}
.combo.w44 {
  width: 44px;
}
.dd {
  display: flex;
  align-items: center;
  justify-content: center;
  width: 15px;
  height: 100%;
  flex: none;
  border-left: 1px solid #b8b8be;
}
.dd.blue {
  background: linear-gradient(#f4fbff, #d6ecfa);
}
.dd::after {
  content: '';
  border: 4px solid transparent;
  border-top-color: #222;
  border-bottom: 0;
}
.code {
  width: 96px;
}
.code input {
  padding-right: 5px;
  text-align: center;
  font-size: 12px;
}
.slot {
  width: 17px;
  height: 100%;
  background: linear-gradient(#fff, #dceefa);
  border-right: 1px solid #ccc;
}
.spin {
  display: flex;
  flex-direction: column;
  gap: 4px;
  align-items: center;
  justify-content: center;
  width: 11px;
  height: 20px;
  flex: none;
}
.up {
  border: 4px solid transparent;
  border-bottom-color: #555;
  border-top: 0;
}
.down {
  border: 4px solid transparent;
  border-top-color: #555;
  border-bottom: 0;
}
.rate {
  width: 20px;
  height: 20px;
  flex: none;
  background: #4b8c12;
  color: #fff;
  display: flex;
  flex-direction: column;
  align-items: center;
  font-size: 10px;
  line-height: 10px;
}
.field {
  height: 20px;
  border: 1px solid #8e8e94;
  background: #fff;
}
.name {
  width: 100px;
  padding-left: 3px;
  color: #d03030;
}
.seg {
  display: flex;
  flex: none;
}
.sm {
  font-size: 12px;
}
.bar .seg button {
  width: 20px;
  border-color: #b0b0b4;
  border-bottom-color: #7c7c80;
}
.bar .seg button.on {
  background: #d2d2d2;
  color: #e03030;
}
.seg.off {
  margin-left: 6px;
}
.bar .seg.off button {
  color: #a8a8ac;
}
.bar .seg.off button.on {
  color: #f4f4f4;
  background: #cfcfcf;
}
.zero {
  width: 36px;
  background: #e4e4e8;
}
.zero input {
  text-align: center;
  font-size: 12px;
  color: #aaa;
}
.zero .up {
  border-bottom-color: #fff;
}
.zero .down {
  border-top-color: #fff;
}
.num {
  width: 39px;
  padding-right: 8px;
  text-align: right;
  font-size: 12px;
}
.slash {
  width: 8px;
  text-align: center;
}
.date {
  width: 83px;
  margin-left: 1px;
}
.date input {
  padding-left: 2px;
  font-size: 12px;
}

.sync {
  width: 40px;
  flex: none;
}
.quote {
  display: flex;
  align-items: center;
  width: 665px;
  height: 20px;
  flex: none;
  border: 1px solid #8e8e94;
  background: #fff;
  color: #444;
}
.q {
  text-align: right;
  font-size: 12px;
  flex: none;
}
b.q {
  font-size: 14px;
  color: #d02c2c;
}
.price {
  width: 64px;
}
.tri {
  margin-left: 5px;
}
.diff {
  width: 54px;
}
.pct {
  width: 53px;
}
.vol {
  width: 71px;
}
.rat {
  width: 58px;
}
.turn {
  width: 60px;
  padding-right: 1px;
}
.lab {
  width: 35px;
  height: 100%;
  flex: none;
  background: #ececec;
  border: 1px solid #c8c8cc;
  border-width: 0 1px;
  text-align: center;
}
.val {
  width: 60px;
  padding-right: 2px;
  color: #000;
}
.val.hi {
  color: #d02c2c;
}
.nine {
  width: 58px;
  padding-left: 4px;
  gap: 4px;
}

.main {
  display: flex;
  flex: none;
}
.side {
  width: 157px;
  flex: none;
  color: #444;
  background: #f0f0f0;
}
.find {
  display: flex;
  height: 17px;
}
.find input {
  flex: 1;
  background: #fff;
  border: 1px solid #999;
}
.find button {
  width: 20px;
}
.head {
  display: flex;
  align-items: center;
  gap: 6px;
  height: 25px;
  margin: 0;
  padding-left: 6px;
  font-size: 13px;
  font-weight: 500;
  background: #cec9e3;
  border-bottom: 1px solid #000;
}
.listbox {
  display: flex;
  height: 398px;
  background: #f6f6f6;
}
.list {
  flex: 1;
  min-width: 0;
}
.list fieldset {
  margin: 0;
  padding: 0 0 1px;
  border: 0;
  min-width: 0;
}
.list legend {
  display: block;
  width: 100%;
  height: 15px;
  padding: 0 0 0 4px;
  margin-left: 1px;
  line-height: 14px;
  background: #9f9f9f;
}
.list label {
  display: flex;
  align-items: center;
  gap: 8px;
  height: 14px;
  padding-left: 9px;
  line-height: 14px;
  white-space: nowrap;
}
.list input {
  appearance: none;
  width: 12px;
  height: 12px;
  flex: none;
  border: 2px solid #555;
  border-radius: 50%;
  background: #fff;
}
.list input:checked {
  background: radial-gradient(#000 2px, #fff 3px);
}
.vbar {
  width: 16px;
  flex: none;
  display: flex;
  flex-direction: column;
}
.sb {
  width: 16px;
  height: 16px;
  background: #f0f0f0;
  border: 1px solid #fff;
  border-right-color: #777;
  border-bottom-color: #777;
}
.vthumb {
  flex: 1;
  background: #f0f0f0;
  border: 1px solid #fff;
  border-right-color: #777;
  border-bottom: 2px solid #777;
}
.vtrack {
  height: 14px;
  background: #f7f7f7;
}
.a-up,
.a-down,
.a-left,
.a-right {
  border: 4px solid transparent;
}
.a-up {
  border-bottom-color: #000;
  border-top: 0;
}
.a-down {
  border-top-color: #000;
  border-bottom: 0;
}
.a-left {
  border-right-color: #000;
  border-left: 0;
}
.a-right {
  border-left-color: #000;
  border-right: 0;
}
.section {
  width: 100%;
  height: 24px;
  padding-left: 24px;
  justify-content: flex-start;
  font-weight: 500;
  background: linear-gradient(#dedde7, #cbcbcb);
  border-bottom: 1px solid #a49cc6;
}

.center {
  flex: 1;
  min-width: 0;
  border-left: 4px solid #788699;
  background: #fff;
}
.title {
  display: flex;
  align-items: center;
  height: 17px;
  background: #cec9e3;
  border-bottom: 1px solid #a9a6b8;
  color: #444;
  font-size: 14px;
}
.title input {
  appearance: none;
  width: 12px;
  height: 12px;
  margin-right: 6px;
  background: #fff;
  border: 1px solid #aaa;
}
.sp {
  flex: 1;
}
.wb {
  width: 16px;
  height: 15px;
  margin-left: 3px;
  background: #eee;
  border: 1px solid #999;
}
.chart {
  width: 100%;
  background: #fff;
}
.num-text {
  font-size: 12px;
}
.ko-text {
  font-size: 13px;
}
.hbar {
  display: flex;
  align-items: center;
  height: 20px;
  border-top: 1px solid #aaa;
  background: #f0f0f0;
}
.htrack {
  flex: 1;
  height: 16px;
  background: #c8c8c8;
}
.hthumb {
  width: 155px;
  height: 16px;
  border: 1px solid #fff;
  border-right-color: #777;
  border-bottom-color: #777;
}
.zoom {
  appearance: none;
  width: 96px;
  height: 16px;
  margin: 0 4px;
  background: linear-gradient(#999, #999) 0 4px / 100% 1px no-repeat, repeating-linear-gradient(90deg, #888 0 1px, transparent 1px 4px) 0 12px / 100% 4px no-repeat;
}
.zoom::-webkit-slider-thumb {
  appearance: none;
  width: 6px;
  height: 12px;
  background: #eee;
  border: 1px solid #777;
}
.ctl {
  width: 18px;
  height: 18px;
  border: 1px solid #fff;
  border-right-color: #888;
  border-bottom-color: #888;
  background: #f0f0f0;
}
.ctl.flat {
  border-color: #f0f0f0;
}
.tabs {
  display: flex;
  gap: 1px;
  height: 19px;
  background: #f0f0f0;
  border-top: 2px solid #666;
  padding-left: 2px;
}
.tabs button {
  height: 17px;
  padding: 0 10px 0 6px;
  border: 1px solid #fff;
  border-right: 2px solid #777;
}
.tabs button.on {
  background: #fafafa;
  border-left-color: #555;
}

.tools {
  width: 24px;
  flex: none;
  display: flex;
  flex-direction: column;
  align-items: center;
  background: linear-gradient(90deg, #999 0 2px, #fafafa 3px, #d8d8dc);
}
.ta {
  width: 20px;
  height: 19px;
  margin-bottom: 3px;
  background: #f4f4f4;
  border: 1px solid #999;
}
.tlist button {
  width: 20px;
  height: 20px;
}
.tlist svg {
  font-weight: bold;
}
.tdown {
  width: 20px;
  margin-top: 8px;
  height: 20px;
}

.foot {
  flex: 1;
  display: flex;
  min-height: 0;
  overflow: hidden;
  padding: 1px 0 0 3px;
  background: #d2d2d2;
  border-top: 2px solid #777;
  color: #f00;
}
.foot .pick {
  width: 98px;
  margin-right: 15px;
}
.tick {
  width: 128px;
  flex: none;
}
</style>
